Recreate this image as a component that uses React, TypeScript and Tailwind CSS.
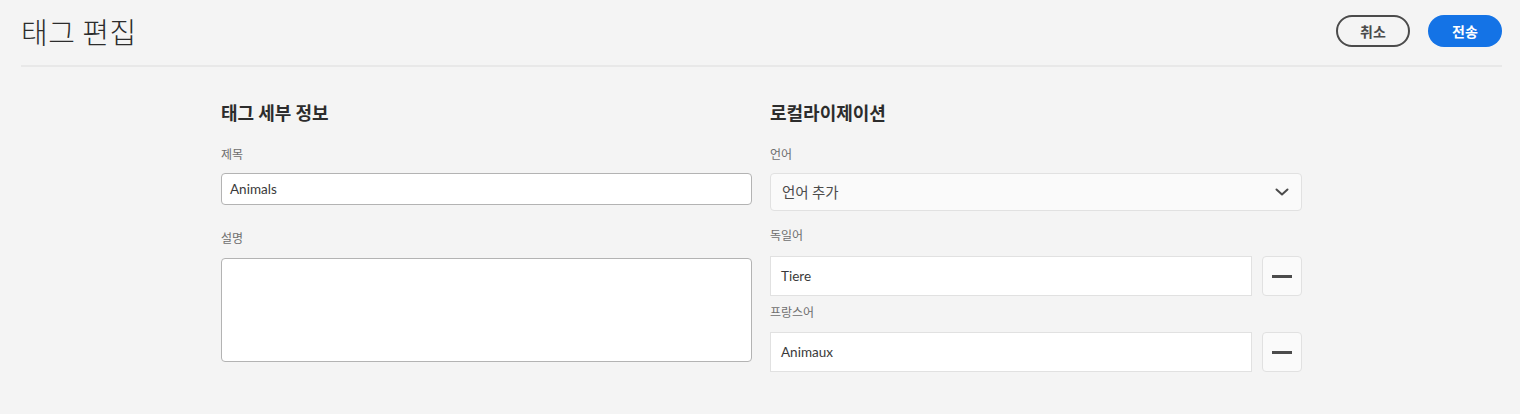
import React from "react";

const font = { fontFamily: '"Noto Sans CJK KR", "Noto Sans", sans-serif' };
const latin = { fontFamily: 'Lato, "Noto Sans CJK KR", sans-serif' };

// Field label above an input
const FieldLabel: React.FC<{ children: React.ReactNode; className?: string }> = ({
  children,
  className = "",
}) => (
  <div className={`text-[12px] leading-4 text-[#6e6e6e] ${className}`}>{children}</div>
);

const MinusButton: React.FC = () => (
  <button
    type="button"
    className="w-10 h-10 flex-shrink-0 rounded-[4px] border border-[#e1e1e1] bg-[#fafafa] flex items-center justify-center"
  >
    <span className="block w-5 h-[3px] bg-[#4b4b4b]" />
  </button>
);

const LocaleRow: React.FC<{ value: string }> = ({ value }) => (
  <div className="flex items-center gap-[10px]">
    <div
      className="flex-1 h-10 bg-white border border-[#e1e1e1] flex items-center px-[10px] text-[13.5px] text-[#3a3a3a]"
      style={latin}
    >
      {value}
    </div>
    <MinusButton />
  </div>
);

export default function App() {
  return (
    <div className="w-[1520px] h-[414px] bg-[#f4f4f4] overflow-hidden" style={font}>
      {/* Header */}
      <div className="pl-[21px] pr-[18px]">
        <div className="flex items-center justify-between pt-[15px] pb-[18px]">
          <h1 className="text-[29px] leading-8 font-light text-[#2c2c2c] tracking-[0.5px]">태그 편집</h1>
          <div className="flex items-center gap-[18px]">
            <button
              type="button"
              className="w-[74px] h-8 rounded-full border-2 border-[#4b4b4b] text-[14px] font-bold text-[#4b4b4b] flex items-center justify-center"
            >
              취소
            </button>
            <button
              type="button"
              className="w-[74px] h-8 rounded-full bg-[#1473e6] text-[14px] font-bold text-white flex items-center justify-center"
            >
              전송
            </button>
          </div>
        </div>
        <div className="h-[2px] bg-[#e8e8e8]" />
      </div>

      {/* Body */}
      <div className="w-[1081px] ml-[221px] pt-[33px] grid grid-cols-[531px_532px] gap-x-[18px]">
        {/* Tag details */}
        <div className="flex flex-col">
          <h2 className="text-[18px] leading-6 font-bold text-[#2c2c2c]">태그 세부 정보</h2>
          <FieldLabel className="mt-[22px]">제목</FieldLabel>
          <div
            className="mt-[11px] h-8 bg-white border border-[#b3b3b3] rounded-[4px] flex items-center px-[8px] text-[13.5px] text-[#3a3a3a]"
            style={latin}
          >
            Animals
          </div>
          <FieldLabel className="mt-[25px]">설명</FieldLabel>
          <div className="mt-[12px] h-[104px] bg-white border border-[#b3b3b3] rounded-[4px]" />
        </div>

        {/* Localization */}
        <div className="flex flex-col">
          <h2 className="text-[18px] leading-6 font-bold text-[#2c2c2c]">로컬라이제이션</h2>
          <FieldLabel className="mt-[22px]">언어</FieldLabel>
          <div className="mt-[11px] h-[38px] bg-[#fafafa] border border-[#e1e1e1] rounded-[4px] flex items-center justify-between pl-[11px] pr-[12px]">
            <span className="text-[14.5px] text-[#4b4b4b]">언어 추가</span>
            <svg width="14" height="14" viewBox="0 0 14 14" fill="none">
              <path d="M1.5 4.5l5.5 5 5.5-5" stroke="#4b4b4b" strokeWidth="2" strokeLinecap="round" strokeLinejoin="round" />
            </svg>
          </div>
          <FieldLabel className="mt-[16px]">독일어</FieldLabel>
          <div className="mt-[13px]">
            <LocaleRow value="Tiere" />
          </div>
          <FieldLabel className="mt-[8px]">프랑스어</FieldLabel>
          <div className="mt-[12px]">
            <LocaleRow value="Animaux" />
          </div>
        </div>
      </div>
    </div>
  );
}
